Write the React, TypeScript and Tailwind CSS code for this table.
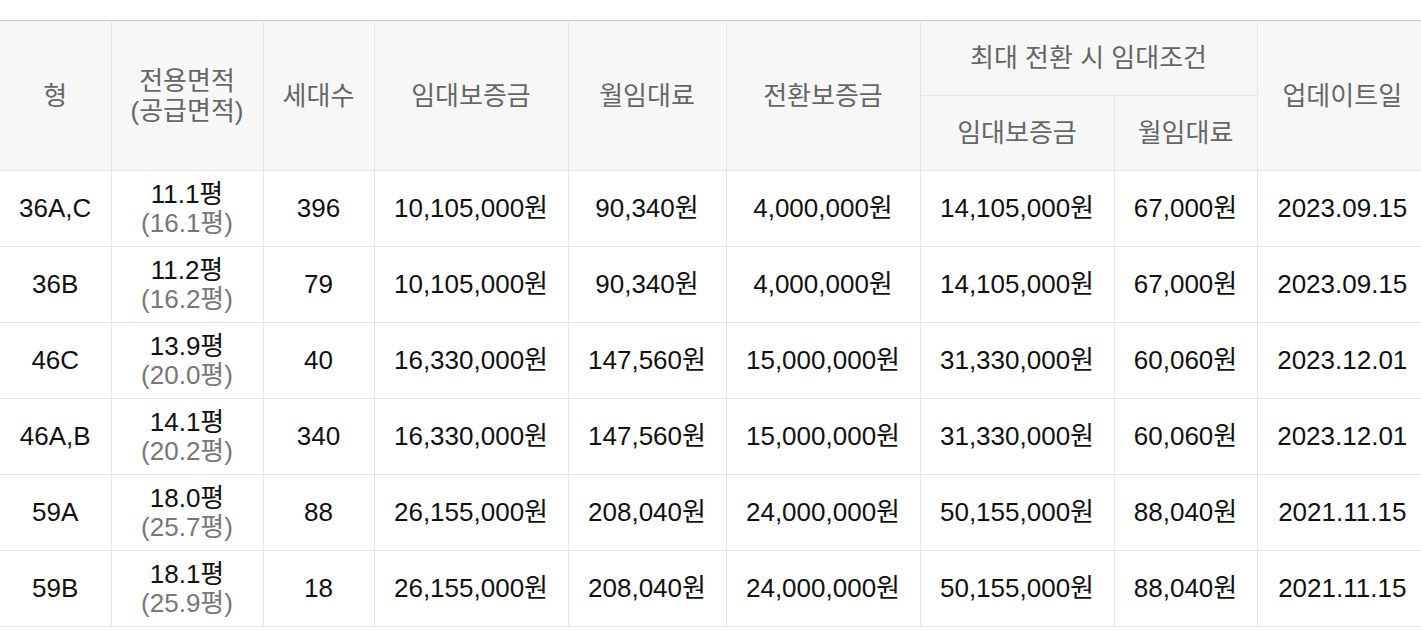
const rows = [
  { type: "36A,C", area: "11.1평", supply: "(16.1평)", units: "396", deposit: "10,105,000원", rent: "90,340원", conv: "4,000,000원", maxDeposit: "14,105,000원", maxRent: "67,000원", updated: "2023.09.15" },
  { type: "36B", area: "11.2평", supply: "(16.2평)", units: "79", deposit: "10,105,000원", rent: "90,340원", conv: "4,000,000원", maxDeposit: "14,105,000원", maxRent: "67,000원", updated: "2023.09.15" },
  { type: "46C", area: "13.9평", supply: "(20.0평)", units: "40", deposit: "16,330,000원", rent: "147,560원", conv: "15,000,000원", maxDeposit: "31,330,000원", maxRent: "60,060원", updated: "2023.12.01" },
  { type: "46A,B", area: "14.1평", supply: "(20.2평)", units: "340", deposit: "16,330,000원", rent: "147,560원", conv: "15,000,000원", maxDeposit: "31,330,000원", maxRent: "60,060원", updated: "2023.12.01" },
  { type: "59A", area: "18.0평", supply: "(25.7평)", units: "88", deposit: "26,155,000원", rent: "208,040원", conv: "24,000,000원", maxDeposit: "50,155,000원", maxRent: "88,040원", updated: "2021.11.15" },
  { type: "59B", area: "18.1평", supply: "(25.9평)", units: "18", deposit: "26,155,000원", rent: "208,040원", conv: "24,000,000원", maxDeposit: "50,155,000원", maxRent: "88,040원", updated: "2021.11.15" },
]

const th = "border border-[#e6e6e6] bg-[#f7f7f7] font-normal text-[#666] leading-[30px]"
const td = "border border-[#e6e6e6] h-[76px] text-[#111] leading-[29px]"

export default function App() {
  return (
    <div className="bg-white w-[1421px] pt-5 overflow-hidden" style={{ fontFamily: '"Liberation Sans", "Noto Sans CJK KR", Arial, sans-serif' }}>
      <table className="w-[1427px] max-w-none table-fixed border-collapse text-center text-[26px] border-t border-t-[#c9c9c9]">
        <colgroup>
          <col className="w-[111px]" />
          <col className="w-[152px]" />
          <col className="w-[111px]" />
          <col className="w-[194px]" />
          <col className="w-[158px]" />
          <col className="w-[194px]" />
          <col className="w-[194px]" />
          <col className="w-[143px]" />
          <col className="w-[170px]" />
        </colgroup>
        <thead>
          <tr className="h-[75px]">
            <th rowSpan={2} className={`${th} border-l-0 border-t-[#c9c9c9]`}>형</th>
            <th rowSpan={2} className={`${th} border-t-[#c9c9c9]`}>
              전용면적
              <br />
              (공급면적)
            </th>
            <th rowSpan={2} className={`${th} border-t-[#c9c9c9]`}>세대수</th>
            <th rowSpan={2} className={`${th} border-t-[#c9c9c9]`}>임대보증금</th>
            <th rowSpan={2} className={`${th} border-t-[#c9c9c9]`}>월임대료</th>
            <th rowSpan={2} className={`${th} border-t-[#c9c9c9]`}>전환보증금</th>
            <th colSpan={2} className={`${th} border-t-[#c9c9c9]`}>최대 전환 시 임대조건</th>
            <th rowSpan={2} className={`${th} border-r-0 border-t-[#c9c9c9]`}>업데이트일</th>
          </tr>
          <tr className="h-[75px]">
            <th className={th}>임대보증금</th>
            <th className={th}>월임대료</th>
          </tr>
        </thead>
        <tbody>
          {rows.map((r) => (
            <tr key={r.type}>
              <td className={`${td} border-l-0`}>{r.type}</td>
              <td className={td}>
                <div>{r.area}</div>
                <div className="text-[#777]">{r.supply}</div>
              </td>
              <td className={td}>{r.units}</td>
              <td className={td}>{r.deposit}</td>
              <td className={td}>{r.rent}</td>
              <td className={td}>{r.conv}</td>
              <td className={td}>{r.maxDeposit}</td>
              <td className={td}>{r.maxRent}</td>
              <td className={`${td} border-r-0`}>{r.updated}</td>
            </tr>
          ))}
        </tbody>
      </table>
    </div>
  )
}
